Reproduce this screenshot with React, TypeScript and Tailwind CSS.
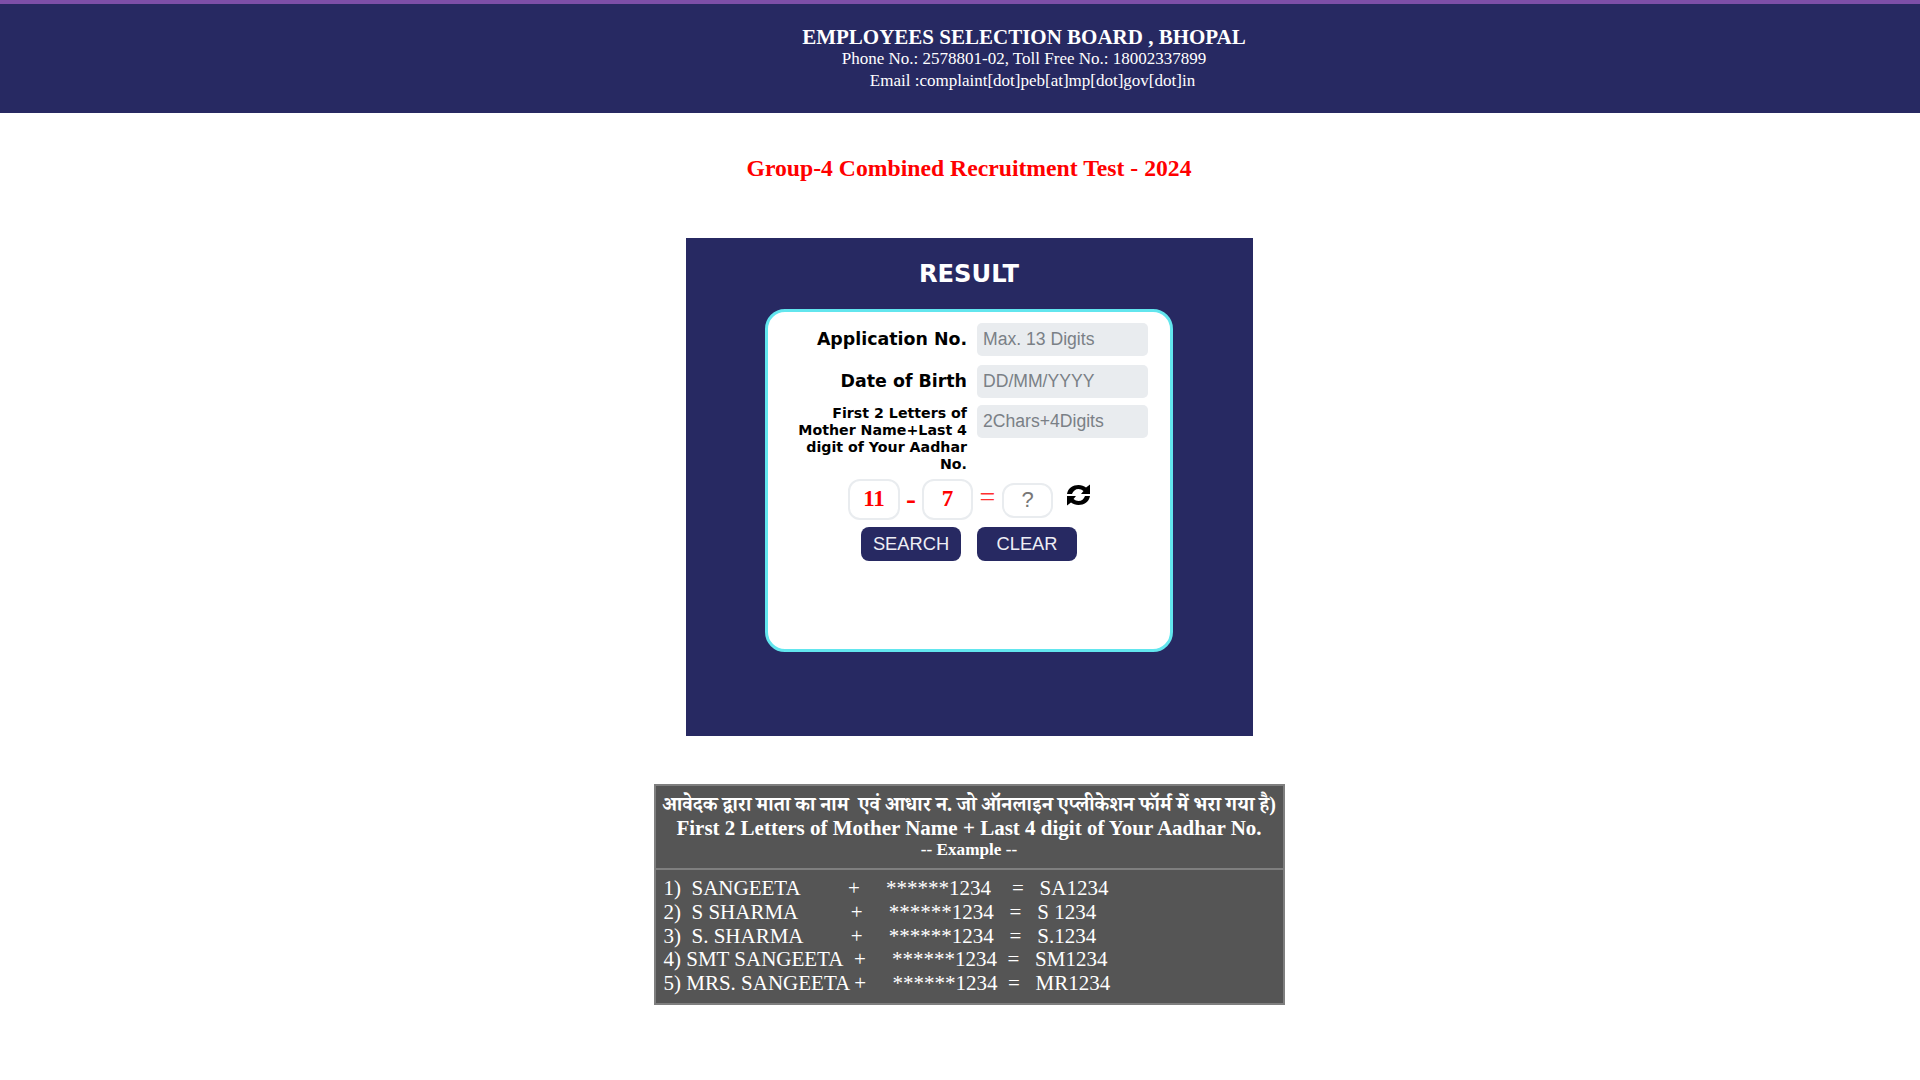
const serif = "font-['Liberation_Serif','Noto_Serif',serif]"

const examples = [
  '1)\u00a0\u00a0SANGEETA\u00a0\u00a0\u00a0\u00a0\u00a0\u00a0\u00a0\u00a0\u00a0+\u00a0\u00a0\u00a0\u00a0\u00a0******1234\u00a0\u00a0\u00a0\u00a0=\u00a0\u00a0\u00a0SA1234',
  '2)\u00a0\u00a0S SHARMA\u00a0\u00a0\u00a0\u00a0\u00a0\u00a0\u00a0\u00a0\u00a0\u00a0+\u00a0\u00a0\u00a0\u00a0\u00a0******1234\u00a0\u00a0\u00a0=\u00a0\u00a0\u00a0S 1234',
  '3)\u00a0\u00a0S. SHARMA\u00a0\u00a0\u00a0\u00a0\u00a0\u00a0\u00a0\u00a0\u00a0+\u00a0\u00a0\u00a0\u00a0\u00a0******1234\u00a0\u00a0\u00a0=\u00a0\u00a0\u00a0S.1234',
  '4) SMT SANGEETA\u00a0\u00a0+\u00a0\u00a0\u00a0\u00a0\u00a0******1234\u00a0\u00a0=\u00a0\u00a0\u00a0SM1234',
  '5) MRS. SANGEETA +\u00a0\u00a0\u00a0\u00a0\u00a0******1234\u00a0\u00a0=\u00a0\u00a0\u00a0MR1234',
]

function Field({ label, placeholder, small }: { label: string; placeholder: string; small?: boolean }) {
  return (
    <div className="flex items-start">
      <label
        className={
          small
            ? "w-[199px] pl-[22px] text-right text-[14.2px] leading-[17px] font-bold text-black font-['DejaVu_Sans',sans-serif]"
            : "w-[199px] h-[33px] leading-[33px] text-right text-[17.4px] font-bold text-black font-['DejaVu_Sans',sans-serif]"
        }
      >
        {label}
      </label>
      <input
        placeholder={placeholder}
        className="ml-[10px] w-[171px] h-[33px] rounded-[5px] bg-[#e9ecef] pl-[6px] text-[17.6px] font-['Liberation_Sans',sans-serif] text-[#495057] placeholder:text-[#7a8086] outline-none"
      />
    </div>
  )
}

function RefreshIcon() {
  return (
    <svg viewBox="0 0 25 22" className="mt-[5px] ml-[13px] w-[25px] h-[22px] fill-black">
      <path d="M1 10C2 4 7 1 12.5 1C15.5 1 18 2 20 3.5L24 0.5V10H15L17.5 7C16 5.7 14.4 5 12.5 5C9.5 5 7 7 6 10Z" />
      <path d="M1 10C2 4 7 1 12.5 1C15.5 1 18 2 20 3.5L24 0.5V10H15L17.5 7C16 5.7 14.4 5 12.5 5C9.5 5 7 7 6 10Z" transform="rotate(180 12.5 11)" />
    </svg>
  )
}

export default function App() {
  return (
    <div className="min-h-[1080px] bg-white">
      <header className={`h-[113px] bg-[#272962] border-t-[4px] border-[#7d4fa8] pt-[22px] pl-[128px] text-center text-white ${serif}`}>
        <h1 className="text-[21px] leading-[22px] font-bold">EMPLOYEES SELECTION BOARD , BHOPAL</h1>
        <p className="text-[17px] leading-[22px]">Phone No.: 2578801-02, Toll Free No.: 18002337899</p>
        <p className="text-[17px] leading-[22px]">&nbsp;&nbsp;&nbsp;&nbsp;Email :complaint[dot]peb[at]mp[dot]gov[dot]in</p>
      </header>

      <main className="flex flex-col items-center pl-[18px]">
        <h2 className={`mt-[42px] text-[23.7px] leading-[26px] font-bold text-[#ff0000] ${serif}`}>
          Group-4 Combined Recruitment Test - 2024
        </h2>

        <section className="mt-[57px] w-[567px] h-[498px] bg-[#272962] pt-[20px]">
          <h3 className="text-center text-[24.2px] leading-[32px] font-bold text-white font-['DejaVu_Sans',sans-serif]">RESULT</h3>

          <div className="mt-[19px] mx-auto w-[408px] h-[343px] rounded-[20px] border-[3px] border-[#62e6ee] bg-white pt-[11px]">
            <Field label="Application No." placeholder="Max. 13 Digits" />
            <div className="mt-[9px]">
              <Field label="Date of Birth" placeholder="DD/MM/YYYY" />
            </div>
            <div className="mt-[7px]">
              <Field small label="First 2 Letters of Mother Name+Last 4 digit of Your Aadhar No." placeholder="2Chars+4Digits" />
            </div>

            <div className="mt-[6px] ml-[80px] flex items-start">
              <div className={`w-[52px] h-[41px] rounded-[12px] border-[2px] border-[#e9ecef] flex items-center justify-center text-[23px] font-bold text-[#ff0000] ${serif}`}>11</div>
              <span className={`w-[22px] h-[39px] leading-[39px] text-center text-[30px] font-bold text-[#ff0000] ${serif}`}>-</span>
              <div className={`w-[51px] h-[41px] rounded-[12px] border-[2px] border-[#e9ecef] flex items-center justify-center text-[23px] font-bold text-[#ff0000] ${serif}`}>7</div>
              <span className="w-[29px] h-[35px] leading-[35px] text-center text-[28px] text-[#ff3030] font-['Liberation_Serif',serif]">=</span>
              <div className="mt-[4px] w-[51px] h-[35px] rounded-[12px] border-[2px] border-[#e9ecef] flex items-center justify-center pb-[2px] text-[22px] text-[#777] font-['Liberation_Sans',sans-serif]">?</div>
              <RefreshIcon />
            </div>

            <div className="mt-[7px] ml-[93px] flex gap-[16px]">
              <button className="w-[100px] h-[34px] rounded-[8px] bg-[#272962] text-[18.3px] text-[#eeeef5] font-['Liberation_Sans',sans-serif]">SEARCH</button>
              <button className="w-[100px] h-[34px] rounded-[8px] bg-[#272962] text-[18.3px] text-[#eeeef5] font-['Liberation_Sans',sans-serif]">CLEAR</button>
            </div>
          </div>
        </section>

        <section className={`mt-[48px] w-[631px] h-[221px] border-[2px] border-[#7f7f7f] bg-[#555555] text-white ${serif}`}>
          <div className="h-[84px] border-b-[2px] border-[#7f7f7f] pt-[7px] text-center">
            <p className="font-bold text-[20px] leading-[23px] whitespace-nowrap font-['Liberation_Serif','Noto_Serif_Devanagari','Noto_Sans_Devanagari',serif]">
              आवेदक द्वारा माता का नाम &nbsp;एवं आधार न. जो ऑनलाइन एप्लीकेशन फॉर्म में भरा गया है)
            </p>
            <p className="font-bold text-[21px] leading-[24px]">First 2 Letters of Mother Name + Last 4 digit of Your Aadhar No.</p>
            <p className="font-bold text-[17.2px] leading-[20px]">-- Example --</p>
          </div>
          <div className="pt-[7px] pl-[8px] text-[21px] leading-[23.8px] whitespace-pre">
            {examples.map(row => (
              <div key={row}>{row}</div>
            ))}
          </div>
        </section>
      </main>
    </div>
  )
}
